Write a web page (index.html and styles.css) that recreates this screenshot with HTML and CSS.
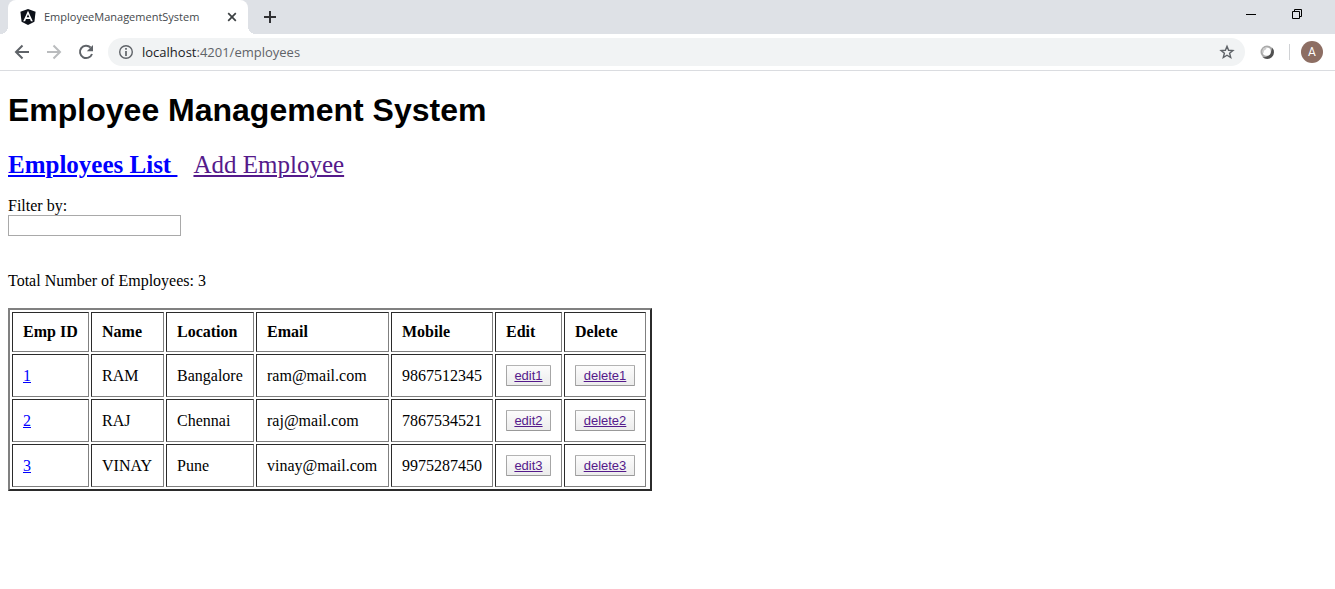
FILE: index.html
```html
<!DOCTYPE html>
<html lang="en">
<head>
<meta charset="utf-8">
<title>EmployeeManagementSystem</title>
<link rel="stylesheet" href="styles.css">
</head>
<body>
<header class="browser">
  <div class="tab-strip">
    <div class="tab">
      <svg class="tab-logo" width="16" height="16" viewBox="0 0 16 16"><path d="M8 0 15.6 2.7 14.4 12.7 8 16 1.6 12.7.4 2.7Z" fill="#0c1018"/><path d="M8 1.800 3.200 12.200h1.900l.9-2.300h4l.9 2.300h1.900ZM8 5.300l1.300 3H6.700Z" fill="#fff" fill-rule="evenodd"/></svg>
      <span class="tab-title">EmployeeManagementSystem</span>
      <button class="icon-button tab-close" aria-label="Close tab"><svg width="10" height="10" viewBox="0 0 10 10"><path d="m1.2 1.2 7.6 7.6m0-7.6L1.2 8.8" stroke="#3c4043" stroke-width="1.7"/></svg></button>
    </div>
    <button class="icon-button new-tab" aria-label="New tab"><svg width="12" height="12" viewBox="0 0 12 12"><path d="M6 0v12M0 6h12" stroke="#303134" stroke-width="2"/></svg></button>
    <div class="window-controls">
      <button class="icon-button" aria-label="Minimize"><svg width="12" height="12" viewBox="0 0 12 12"><path d="M1 6.5h10" stroke="#000"/></svg></button>
      <button class="icon-button" aria-label="Restore"><svg width="12" height="12" viewBox="0 0 12 12" fill="none" stroke="#000"><path d="M1.500 3.500h7v7h-7zM3.500 3.500v-2h7v7h-2"/></svg></button>
    </div>
  </div>
  <div class="toolbar">
    <button class="icon-button" aria-label="Back"><svg width="16" height="16" viewBox="0 0 16 16" fill="none" stroke="#5f6368" stroke-width="2"><path d="M15 8H2.500M8.500 1.500 2 8l6.500 6.500"/></svg></button>
    <button class="icon-button" aria-label="Forward"><svg width="16" height="16" viewBox="0 0 16 16" fill="none" stroke="#babcbe" stroke-width="2"><path d="M1 8h12.500M7.500 1.500 14 8l-6.500 6.500"/></svg></button>
    <button class="icon-button" aria-label="Reload"><svg width="16" height="16" viewBox="0 0 16 16"><path d="M12.600 3.500A6.200 6.200 0 1 0 14 10" fill="none" stroke="#5f6368" stroke-width="2"/><path d="M15 1v6.200H8.800Z" fill="#5f6368"/></svg></button>
    <div class="address">
      <svg width="16" height="16" viewBox="0 0 16 16"><circle cx="8" cy="8" r="6.300" fill="none" stroke="#5f6368" stroke-width="1.400"/><path d="M8 4v1.700M8 7v5" stroke="#5f6368" stroke-width="1.700"/></svg>
      <div class="url"><span class="host">localhost</span>:4201/employees</div>
      <button class="icon-button" aria-label="Bookmark"><svg width="16" height="16" viewBox="0 0 16 16"><path d="m8 2.300 1.600 4 4.300.300-3.300 2.700 1.100 4.200L8 11.200l-3.700 2.300 1.100-4.200-3.300-2.700 4.300-.300Z" fill="none" stroke="#5f6368" stroke-width="1.400"/></svg></button>
    </div>
    <button class="icon-button extension" aria-label="Extension"><svg width="16" height="16" viewBox="0 0 16 16"><circle cx="8" cy="8" r="6.500" fill="#aaa"/><path d="M13 3.500A6.500 6.500 0 1 1 3.500 13c5 1 9-3 9.500-9.500Z" fill="#505050"/><circle cx="7.700" cy="7.700" r="4.100" fill="#fff"/><path d="M3.600 7.700a4.100 4.100 0 0 1 4.100-4.100l-.7 2A3 3 0 0 0 5 9.500Z" fill="#ccc"/></svg></button>
    <button class="profile">A</button>
  </div>
</header>
<main class="page">
  <h1 class="title">Employee Management System</h1>
  <nav class="nav"><a class="nav-current" href="#list">Employees List&nbsp;</a><a class="visited" href="#add">Add Employee</a></nav>
  <div class="filter">
    <label for="filter">Filter by:</label>
    <input class="filter-input" id="filter" type="text">
  </div>
  <p class="total">Total Number of Employees: 3</p>
  <table class="employees">
    <colgroup><col class="col-id"><col class="col-name"><col class="col-location"><col class="col-email"><col class="col-mobile"><col class="col-edit"><col class="col-delete"></colgroup>
    <thead><tr><th>Emp ID</th><th>Name</th><th>Location</th><th>Email</th><th>Mobile</th><th>Edit</th><th>Delete</th></tr></thead>
    <tbody>
      <tr><td><a class="id" href="#1">1</a></td><td>RAM</td><td>Bangalore</td><td>ram@mail.com</td><td>9867512345</td><td><button class="action">edit1</button></td><td><button class="action">delete1</button></td></tr>
      <tr><td><a class="id" href="#2">2</a></td><td>RAJ</td><td>Chennai</td><td>raj@mail.com</td><td>7867534521</td><td><button class="action">edit2</button></td><td><button class="action">delete2</button></td></tr>
      <tr><td><a class="id" href="#3">3</a></td><td>VINAY</td><td>Pune</td><td>vinay@mail.com</td><td>9975287450</td><td><button class="action">edit3</button></td><td><button class="action">delete3</button></td></tr>
    </tbody>
  </table>
</main>
</body>
</html>
```
FILE: styles.css
```css
* { box-sizing: border-box; }
body { margin: 0; background: #fff; color: #000; font: 16px/18px "Liberation Serif", "Times New Roman", serif; }
svg { display: block; flex: none; }
.browser { font-family: "Open Sans", "Segoe UI", sans-serif; border-bottom: 1px solid #dadce0; }
.icon-button { display: flex; align-items: center; justify-content: center; border: 0; padding: 0; background: none; }
.tab-strip { display: flex; align-items: center; height: 34px; padding-left: 8px; background: #dee1e6; }
.tab { position: relative; display: flex; align-items: center; align-self: stretch; width: 240px; padding: 0 11px 0 12px; background: #fff; border-radius: 8px 8px 0 0; }
.tab::before, .tab::after { content: ""; position: absolute; bottom: 0; width: 8px; height: 8px; }
.tab::before { left: -8px; background: radial-gradient(circle at 0 0, transparent 8px, #fff 8px); }
.tab::after { right: -8px; background: radial-gradient(circle at 100% 0, transparent 8px, #fff 8px); }
.tab-title { flex: 1; margin-left: 8px; font-size: 11px; color: #45494d; white-space: nowrap; }
.new-tab { margin-left: 16px; }
.window-controls { display: flex; gap: 34px; margin-left: auto; padding: 0 32px 6px 0; }
.toolbar { display: flex; align-items: center; gap: 16px; height: 36px; padding: 0 12px 0 14px; }
.address { display: flex; flex: 1; align-items: center; gap: 8px; height: 28px; margin-left: -2px; padding: 0 10px; border-radius: 14px; background: #f1f3f4; }
.url { flex: 1; font-size: 13px; color: #5f6368; }
.host { color: #202124; }
.extension { margin-left: -2px; }
.profile { position: relative; width: 22px; height: 22px; margin-left: 10px; padding: 0; border: 0; border-radius: 50%; background: #8d6e63; color: #fff; font: 12px/22px Roboto, sans-serif; }
.profile::before { content: ""; position: absolute; left: -12px; top: 3px; width: 1px; height: 16px; background: #d0d2d5; }
.page { padding: 21px 8px 8px; }
.title { margin: 0; font: bold 32px/36px "Liberation Sans", Arial, sans-serif; }
.nav { display: flex; gap: 16px; margin-top: 22px; font-size: 25px; line-height: 30px; }
.nav a { text-decoration-thickness: 2px; text-underline-offset: 2px; }
.nav-current { font-weight: bold; color: #00f; }
.visited { color: #551a8b; }
.filter { display: flex; flex-direction: column; align-items: flex-start; margin-top: 17px; }
.filter-input { width: 173px; height: 21px; padding: 1px; border: 1px solid #a9a9a9; font: 13px "Liberation Sans", Arial, sans-serif; }
.total { margin: 36px 0 18px; }
.employees { padding-right: 2px; border: 2px solid; border-color: #808080 #2b2b2b #2b2b2b #808080; border-spacing: 2px; }
.employees th, .employees td { padding: 10px; border: 1px solid; border-color: #2b2b2b #808080 #808080 #2b2b2b; text-align: left; }
.col-id { width: 77px; }
.col-name { width: 73px; }
.col-location { width: 88px; }
.col-email { width: 133px; }
.col-mobile { width: 102px; }
.col-edit { width: 67px; }
.col-delete { width: 82px; }
.id { color: #00f; }
.action { display: block; width: 100%; height: 21px; padding: 0 7px; border: 1px solid; border-color: #b3b3b3 #a6a6a6 #999; border-radius: 1px; background: linear-gradient(#fcfcfc, #ececec); color: #551a8b; font: 13px/18px "Liberation Sans", Arial, sans-serif; text-decoration: underline; }
```
